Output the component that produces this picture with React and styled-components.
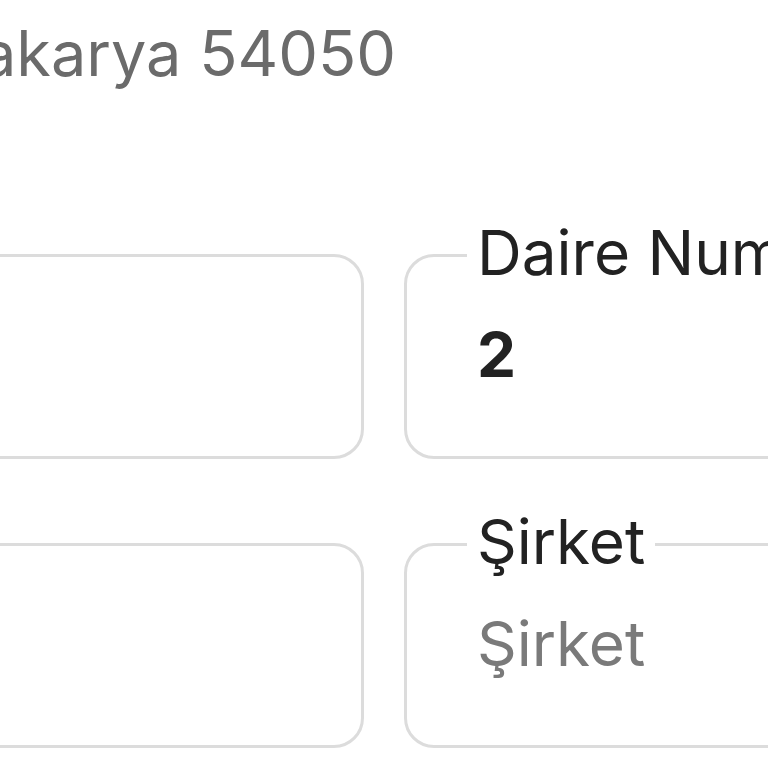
import styled, { createGlobalStyle } from 'styled-components';

const GlobalStyle = createGlobalStyle`
  html, body {
    margin: 0;
    padding: 0;
    background: #ffffff;
    overflow: hidden;
  }
  body {
    font-family: Inter, "Noto Sans", "Liberation Sans", sans-serif;
  }
`;

const Page = styled.div`
  width: 768px;
  height: 768px;
  overflow: hidden;
`;

const AddressLine = styled.div`
  display: flex;
  justify-content: flex-end;
  width: 396px;
  height: 110px;
  padding-top: 8px;
  font-size: 63px;
  line-height: 90px;
  color: #6b6b6b;
  white-space: nowrap;
`;

const Grid = styled.div`
  display: grid;
  grid-template-columns: 760px 760px;
  column-gap: 40px;
  row-gap: 52px;
  margin-left: -396px;
  margin-top: 104px;
`;

const Field = styled.fieldset`
  margin: 0;
  height: 237px;
  box-sizing: border-box;
  border: 3px solid #dcdcdc;
  border-radius: 30px;
  padding: 0 20px 0 60px;
  min-width: 0;
`;

const Legend = styled.legend`
  padding: 0 10px 4px;
  font-size: 62px;
  line-height: 62px;
  color: #222222;
  white-space: nowrap;
`;

const Input = styled.input`
  display: block;
  width: 100%;
  box-sizing: border-box;
  border: 0;
  outline: none;
  background: transparent;
  padding: 0 10px;
  margin-top: 32px;
  font-family: inherit;
  font-size: 62px;
  line-height: 70px;
  height: 70px;
  font-weight: 700;
  color: #222222;

  &::placeholder {
    font-weight: 400;
    color: #7a7a7a;
  }
`;

function FormField({ label, value, placeholder }) {
  return (
    <Field>
      <Legend>{label}</Legend>
      <Input readOnly defaultValue={value} placeholder={placeholder} />
    </Field>
  );
}

export default function App() {
  return (
    <Page>
      <GlobalStyle />
      <AddressLine>Sakarya 54050</AddressLine>
      <Grid>
        <FormField label="Bina No" />
        <FormField label="Daire Numarası" value="2" />
        <FormField label="Kat" />
        <FormField label="Şirket" placeholder="Şirket" />
      </Grid>
    </Page>
  );
}
